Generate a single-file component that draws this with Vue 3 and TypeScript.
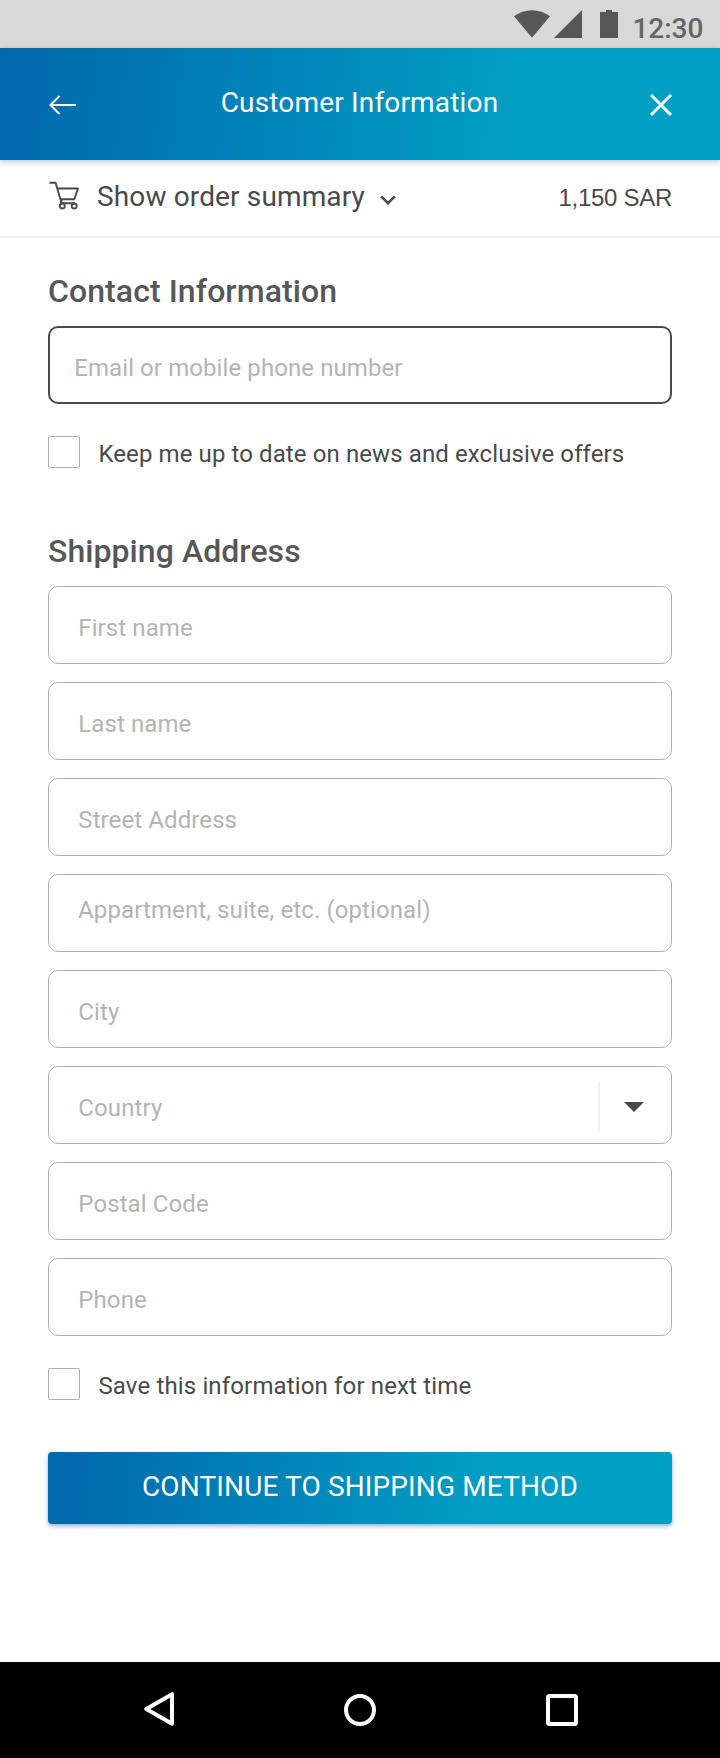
<script setup lang="ts">
import { reactive, ref } from 'vue'

interface Field {
  key: string
  label: string
  kind?: 'raised' | 'select'
}

const fields: Field[] = [
  { key: 'first', label: 'First name' },
  { key: 'last', label: 'Last name' },
  { key: 'street', label: 'Street Address' },
  { key: 'suite', label: 'Appartment, suite, etc. (optional)', kind: 'raised' },
  { key: 'city', label: 'City' },
  { key: 'country', label: 'Country', kind: 'select' },
  { key: 'postal', label: 'Postal Code' },
  { key: 'phone', label: 'Phone' },
]

const contact = ref('')
const address = reactive<Record<string, string>>({})
const newsletter = ref(false)
const remember = ref(false)
</script>

<template>
  <div class="screen">
    <div class="status">
      <svg class="signals" width="106" height="30" viewBox="0 0 106 30">
        <path d="M0 6.2C10 -1.9 26 -1.9 36 6.2L18 27.8Z" />
        <path d="M40 28L68 0V28Z" />
        <path d="M86 2h6v-2h6v2h6v26h-18Z" />
      </svg>
      <span class="time">12:30</span>
    </div>

    <header class="header">
      <button class="icon-btn" aria-label="Back">
        <svg width="28" height="20" viewBox="0 0 28 20">
          <path d="M10.5 1L1.5 10L10.5 19M1.5 10H27" fill="none" stroke="#fff" stroke-width="2" />
        </svg>
      </button>
      <h1>Customer Information</h1>
      <button class="icon-btn" aria-label="Close">
        <svg width="22" height="22" viewBox="0 0 22 22">
          <path d="M1 1L21 21M21 1L1 21" fill="none" stroke="#fff" stroke-width="3" />
        </svg>
      </button>
    </header>

    <div class="summary">
      <svg class="cart" width="31" height="29" viewBox="0 0 31 29" fill="none" stroke="#4a4a4a" stroke-width="1.9">
        <path d="M0.5 1.8H6.6L12.6 22.3H26M8 7.5H29L25.3 18.3H11.8" stroke-linejoin="round" />
        <path d="M12.6 18.6L11.9 22.5" />
        <circle cx="13.3" cy="25" r="2.5" />
        <circle cx="25.2" cy="25" r="2.5" />
      </svg>
      <span class="summary-label">Show order summary</span>
      <svg class="chevron" width="16" height="11" viewBox="0 0 16 11">
        <path d="M1.2 1.4L8 8.2L14.8 1.4" fill="none" stroke="#4a4a4a" stroke-width="2.6" />
      </svg>
      <span class="price">1,150 SAR</span>
    </div>

    <main class="form">
      <h2 class="contact-title">Contact Information</h2>
      <div class="field active">
        <input v-model="contact" placeholder="Email or mobile phone number" />
      </div>
      <label class="check">
        <input v-model="newsletter" type="checkbox" />
        <span>Keep me up to date on news and exclusive offers</span>
      </label>

      <h2 class="shipping-title">Shipping Address</h2>
      <div class="fields">
        <div v-for="f in fields" :key="f.key" class="field" :class="f.kind">
          <input v-model="address[f.key]" :placeholder="f.label" />
          <span v-if="f.kind === 'select'" class="toggle">
            <svg width="20" height="10" viewBox="0 0 20 10"><path d="M0 0H20L10 10Z" fill="#4a4a4a" /></svg>
          </span>
        </div>
      </div>
      <label class="check save">
        <input v-model="remember" type="checkbox" />
        <span>Save this information for next time</span>
      </label>

      <button class="submit">CONTINUE TO SHIPPING METHOD</button>
    </main>

    <nav class="nav">
      <svg width="32" height="36" viewBox="0 0 32 36">
        <path d="M28 3.2V32.8L2.3 18Z" fill="none" stroke="#fff" stroke-width="4" stroke-linejoin="round" />
      </svg>
      <svg class="home" width="32" height="32" viewBox="0 0 32 32">
        <circle cx="16" cy="16" r="14" fill="none" stroke="#fff" stroke-width="4" />
      </svg>
      <svg width="32" height="32" viewBox="0 0 32 32">
        <rect x="2" y="2" width="28" height="28" rx="1.5" fill="none" stroke="#fff" stroke-width="4" />
      </svg>
    </nav>
  </div>
</template>

<style>
body {
  margin: 0;
  background: #fff;
}
</style>

<style scoped>
.screen,
.screen * {
  box-sizing: border-box;
}
.screen {
  display: flex;
  flex-direction: column;
  width: 720px;
  height: 1758px;
  background: #fff;
  color: #4a4a4a;
  font-family: Roboto, "Liberation Sans", sans-serif;
}
svg {
  display: block;
  flex: none;
}
button {
  border: 0;
  padding: 0;
  background: none;
  font-family: inherit;
}
.status {
  display: flex;
  flex: none;
  justify-content: flex-end;
  height: 48px;
  padding: 10px 16px 0 0;
  background: #d8d8d8;
}
.signals {
  margin-right: 12.4px;
  fill: #575757;
}
.time {
  width: 71.6px;
  font-weight: 500;
  font-size: 28px;
  line-height: 37px;
  color: #666;
}
.header {
  display: flex;
  flex: none;
  align-items: center;
  justify-content: space-between;
  height: 112px;
  padding: 2px 48px 0 49px;
  background: linear-gradient(97deg, #0067ac 0%, #009fc4 72%);
  box-shadow: 0 2px 6px rgba(0, 0, 0, 0.22);
}
.icon-btn {
  display: flex;
  width: 28px;
}
.icon-btn:last-child {
  justify-content: flex-end;
}
h1 {
  margin: 0;
  padding: 0 2px 5px 0;
  font-weight: 400;
  font-size: 28px;
  line-height: 36px;
  letter-spacing: 0.17px;
  color: #fff;
}
.summary {
  display: flex;
  flex: none;
  align-items: center;
  height: 78px;
  padding: 0 48px 3px 49px;
  border-bottom: 2px solid #efefef;
}
.cart {
  margin: -2px 17px 0 0;
}
.summary-label {
  font-size: 28px;
  line-height: 36px;
  letter-spacing: 0.14px;
}
.chevron {
  margin: 8px 0 0 15px;
}
.price {
  margin-left: auto;
  padding-top: 2px;
  font-family: "Liberation Sans", Arial, sans-serif;
  font-size: 24px;
  line-height: 28px;
  letter-spacing: -0.28px;
}
.form {
  flex: 1;
  padding: 33px 48px 0;
}
h2 {
  margin: 0 0 15px;
  font-weight: 500;
  font-size: 32px;
  line-height: 40px;
  color: #575757;
}
.contact-title {
  letter-spacing: 0.08px;
}
.shipping-title {
  margin-top: 63px;
  letter-spacing: 0.06px;
}
.fields {
  display: flex;
  flex-direction: column;
  gap: 18px;
}
.field {
  display: flex;
  height: 78px;
  border: 1px solid #b0b0b0;
  border-radius: 10px;
}
.field input {
  flex: 1;
  min-width: 0;
  padding: 6px 0 0 29.3px;
  border: 0;
  outline: 0;
  background: transparent;
  font: 400 24px Roboto, "Liberation Sans", sans-serif;
  letter-spacing: 0.1px;
  color: #4a4a4a;
}
.field input::placeholder {
  color: #b4b4b4;
  opacity: 1;
}
.field.active {
  border: 2px solid #4a4a4a;
}
.field.active input {
  padding-left: 24.2px;
  letter-spacing: 0.09px;
}
.field.raised input {
  padding: 0 0 6px 29.1px;
}
.toggle {
  display: flex;
  align-items: center;
  justify-content: center;
  width: 73px;
  height: 51px;
  margin-top: 14px;
  padding: 1px 4px 0 0;
  border-left: 2px solid #efefef;
}
.check {
  display: flex;
  align-items: center;
  height: 32px;
  margin-top: 32px;
  font-size: 24px;
  letter-spacing: 0.1px;
}
.check span {
  padding: 4px 0 0 18.4px;
}
.check input {
  appearance: none;
  width: 32px;
  height: 32px;
  margin: 0;
  border: 1px solid #b0b0b0;
  border-radius: 2px;
}
.check input:checked {
  background: #009fc4;
}
.save {
  letter-spacing: 0.147px;
}
.submit {
  display: block;
  width: 100%;
  height: 72px;
  margin-top: 52px;
  padding-bottom: 3px;
  border-radius: 4px;
  background: linear-gradient(97deg, #0067ac 0%, #009fc4 72%);
  box-shadow: 0 2px 4px rgba(0, 80, 160, 0.45);
  font-size: 28px;
  letter-spacing: 0.13px;
  color: #fff;
}
.nav {
  display: flex;
  flex: none;
  align-items: center;
  justify-content: space-between;
  height: 96px;
  padding: 0 142px 0 144px;
  background: #000;
}
.nav svg:first-child {
  margin-top: -2px;
}
.nav .home {
  margin-right: 2px;
}
</style>
